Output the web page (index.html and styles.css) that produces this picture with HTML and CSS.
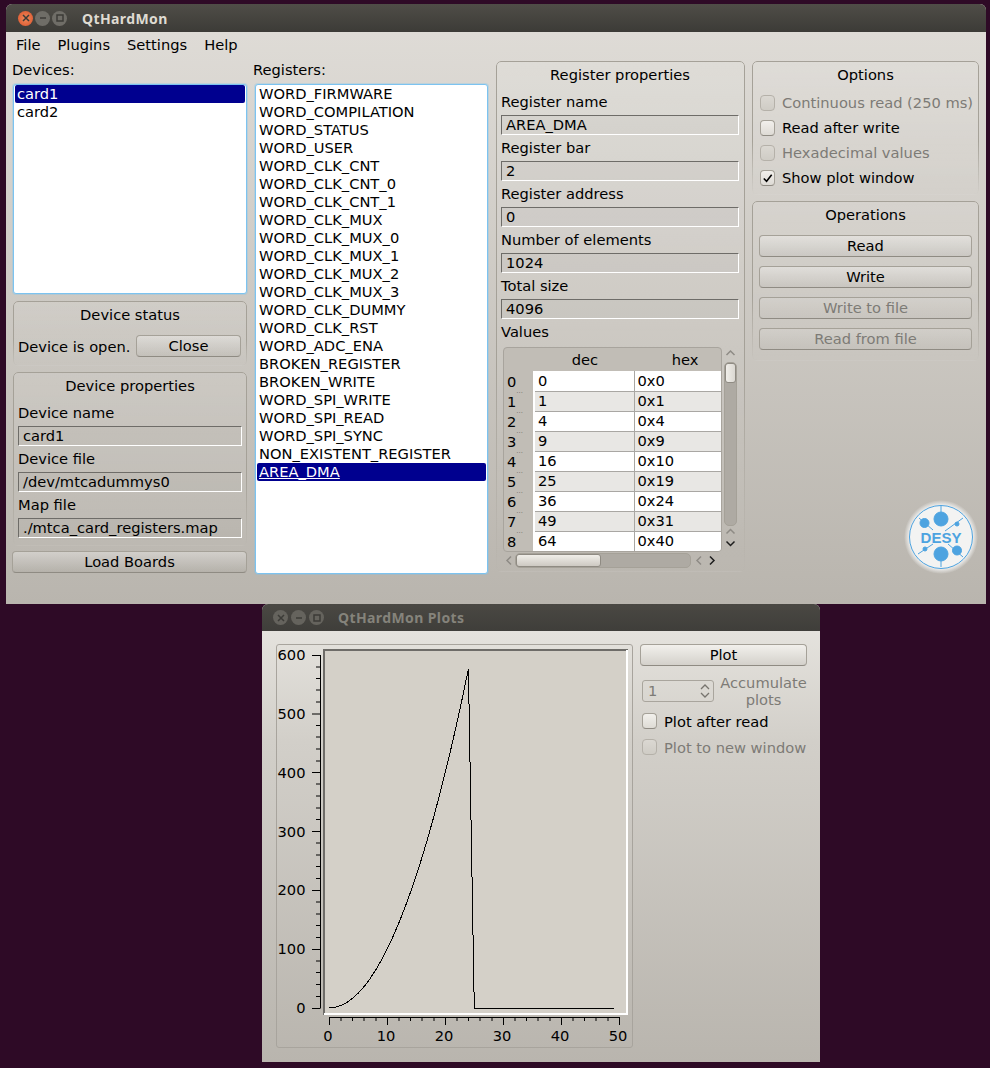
FILE: index.html
```html
<!DOCTYPE html>
<html lang="en">
<head>
    <meta charset="UTF-8">
    <meta name="viewport" content="width=device-width, initial-scale=1.0">
    <title>QtHardMon</title>
    <link rel="stylesheet" href="styles.css">
</head>
<body>
    <!-- main window -->
    <section class="window main-window">
        <header class="titlebar">
            <span class="wm-btn wm-close"><svg width="8" height="8" viewBox="0 0 8 8"><path d="M1 1L7 7M7 1L1 7"/></svg></span>
            <span class="wm-btn"><svg width="8" height="8" viewBox="0 0 8 8"><path d="M1 4H7"/></svg></span>
            <span class="wm-btn"><svg width="8" height="8" viewBox="0 0 8 8"><path d="M1 1H7V7H1Z"/></svg></span>
            <span class="title">QtHardMon</span>
        </header>
        <nav class="menubar">
            <span>File</span>
            <span>Plugins</span>
            <span>Settings</span>
            <span>Help</span>
        </nav>
        <div class="main-body">
            <div class="col">
                <div class="caption">Devices:</div>
                <ul class="list device-list">
                    <li class="selected">card1</li>
                    <li>card2</li>
                </ul>
                <div class="group status-group">
                    <div class="group-title">Device status</div>
                    <div class="status-row">
                        <span>Device is open.</span>
                        <button class="btn close-btn">Close</button>
                    </div>
                </div>
                <div class="group props-group">
                    <div class="group-title">Device properties</div>
                    <div class="prop-label first">Device name</div>
                    <div class="field">card1</div>
                    <div class="prop-label">Device file</div>
                    <div class="field">/dev/mtcadummys0</div>
                    <div class="prop-label">Map file</div>
                    <div class="field">./mtca_card_registers.map</div>
                </div>
                <button class="btn load-btn">Load Boards</button>
            </div>

            <div class="col">
                <div class="caption">Registers:</div>
                <ul class="list register-list">
                    <li>WORD_FIRMWARE</li>
                    <li>WORD_COMPILATION</li>
                    <li>WORD_STATUS</li>
                    <li>WORD_USER</li>
                    <li>WORD_CLK_CNT</li>
                    <li>WORD_CLK_CNT_0</li>
                    <li>WORD_CLK_CNT_1</li>
                    <li>WORD_CLK_MUX</li>
                    <li>WORD_CLK_MUX_0</li>
                    <li>WORD_CLK_MUX_1</li>
                    <li>WORD_CLK_MUX_2</li>
                    <li>WORD_CLK_MUX_3</li>
                    <li>WORD_CLK_DUMMY</li>
                    <li>WORD_CLK_RST</li>
                    <li>WORD_ADC_ENA</li>
                    <li>BROKEN_REGISTER</li>
                    <li>BROKEN_WRITE</li>
                    <li>WORD_SPI_WRITE</li>
                    <li>WORD_SPI_READ</li>
                    <li>WORD_SPI_SYNC</li>
                    <li>NON_EXISTENT_REGISTER</li>
                    <li class="selected underlined">AREA_DMA</li>
                </ul>
            </div>

            <div class="col">
                <div class="group register-group">
                    <div class="group-title">Register properties</div>
                    <div class="prop-label first">Register name</div>
                    <div class="field">AREA_DMA</div>
                    <div class="prop-label">Register bar</div>
                    <div class="field">2</div>
                    <div class="prop-label">Register address</div>
                    <div class="field">0</div>
                    <div class="prop-label">Number of elements</div>
                    <div class="field">1024</div>
                    <div class="prop-label">Total size</div>
                    <div class="field">4096</div>
                    <div class="prop-label">Values</div>
                    <div class="table-area">
                        <div class="table-frame">
                            <table class="values">
                                <thead>
                                    <tr><th class="corner"></th><th>dec</th><th class="hex-head">hex</th></tr>
                                </thead>
                                <tbody>
                                    <tr><th>0<i>...</i></th><td>0</td><td>0x0</td></tr>
                                    <tr><th>1<i>...</i></th><td>1</td><td>0x1</td></tr>
                                    <tr><th>2<i>...</i></th><td>4</td><td>0x4</td></tr>
                                    <tr><th>3<i>...</i></th><td>9</td><td>0x9</td></tr>
                                    <tr><th>4<i>...</i></th><td>16</td><td>0x10</td></tr>
                                    <tr><th>5<i>...</i></th><td>25</td><td>0x19</td></tr>
                                    <tr><th>6<i>...</i></th><td>36</td><td>0x24</td></tr>
                                    <tr><th>7<i>...</i></th><td>49</td><td>0x31</td></tr>
                                    <tr><th>8<i>...</i></th><td>64</td><td>0x40</td></tr>
                                </tbody>
                            </table>
                        </div>
                        <div class="vscroll">
                            <svg class="arrow" width="13" height="15" viewBox="0 0 13 15"><path class="dim" d="M2.500 8L6.500 4L10.500 8"/></svg>
                            <div class="vtrough"><div class="vthumb"></div></div>
                            <svg class="arrow" width="13" height="26" viewBox="0 0 13 26"><path class="dim" d="M2.500 7.500L6.500 3.500L10.500 7.500"/><path d="M2.500 15.500L6.500 19.500L10.500 15.500"/></svg>
                        </div>
                    </div>
                    <div class="hscroll">
                        <svg class="arrow" width="13" height="15" viewBox="0 0 13 15"><path class="dim" d="M9 3.500L5 7.500L9 11.500"/></svg>
                        <div class="htrough"><div class="hthumb"></div></div>
                        <svg class="arrow" width="13" height="15" viewBox="0 0 13 15"><path class="dim" d="M9 3.500L5 7.500L9 11.500"/></svg>
                        <svg class="arrow" width="13" height="15" viewBox="0 0 13 15"><path d="M5 3.500L9 7.500L5 11.500"/></svg>
                    </div>
                </div>
            </div>

            <div class="col">
                <div class="group options-group">
                    <div class="group-title">Options</div>
                    <div class="checks">
                        <label class="check disabled"><span class="box"></span>Continuous read (250 ms)</label>
                        <label class="check"><span class="box"></span>Read after write</label>
                        <label class="check disabled"><span class="box"></span>Hexadecimal values</label>
                        <label class="check"><span class="box"><svg width="14" height="14" viewBox="0 0 14 14"><path d="M3 7.500L6 10.500L11.500 3.500"/></svg></span>Show plot window</label>
                    </div>
                </div>
                <div class="group operations-group">
                    <div class="group-title">Operations</div>
                    <div class="op-buttons">
                        <button class="btn">Read</button>
                        <button class="btn">Write</button>
                        <button class="btn disabled">Write to file</button>
                        <button class="btn disabled">Read from file</button>
                    </div>
                </div>
                <svg class="desy-logo" width="74" height="74" viewBox="0 0 74 74">
                    <defs>
                        <radialGradient id="glow">
                            <stop offset="0.84" stop-color="#f3f3f2"/>
                            <stop offset="1" stop-color="#f3f3f2" stop-opacity="0"/>
                        </radialGradient>
                    </defs>
                    <circle cx="37" cy="37" r="37" fill="url(#glow)"/>
                    <circle cx="37" cy="37" r="31.500" fill="none" stroke="#4da3e0" stroke-width="1"/>
                    <g fill="#4da3e0" stroke="#4da3e0" stroke-width="1">
                        <path d="M37 6V12M37 61V67M15 18L29 30M44 44L59 57M59 18L41 31M14 54L29 44" fill="none"/>
                        <circle cx="37" cy="19" r="7"/>
                        <circle cx="37" cy="54" r="7"/>
                        <circle cx="20.500" cy="23" r="4.500"/>
                        <circle cx="53" cy="50.500" r="4.500"/>
                        <circle cx="53" cy="24" r="2"/>
                        <circle cx="21" cy="49" r="2"/>
                    </g>
                    <text class="desy-text" x="37" y="42.500" text-anchor="middle">DESY</text>
                </svg>
            </div>
        </div>
    </section>

    <!-- plot window -->
    <section class="window plot-window">
        <header class="titlebar inactive">
            <span class="wm-btn"><svg width="8" height="8" viewBox="0 0 8 8"><path d="M1 1L7 7M7 1L1 7"/></svg></span>
            <span class="wm-btn"><svg width="8" height="8" viewBox="0 0 8 8"><path d="M1 4H7"/></svg></span>
            <span class="wm-btn"><svg width="8" height="8" viewBox="0 0 8 8"><path d="M1 1H7V7H1Z"/></svg></span>
            <span class="title">QtHardMon Plots</span>
        </header>
        <div class="plot-body">
            <div class="plot-frame">
                <svg class="plot" width="355" height="402" viewBox="277 645 355 402">
                    <rect x="324" y="650" width="303" height="364" fill="#d4d0c8"/>
                    <path class="frame-dark" d="M324 1015V650H628"/>
                    <path class="frame-light" d="M324 1014H627V650"/>
                    <g class="axis">
                        <path d="M320.500 655V1008.500M312 655.500H320M312 714H320M312 772.500H320M312 831.500H320M312 890.500H320M312 949.500H320M312 1008.500H320"/>
                        <path d="M316 667H320M316 678.500H320M316 690H320M316 702H320M316 725.500H320M316 737H320M316 749H320M316 761H320M316 784H320M316 796H320M316 808H320M316 819.500H320M316 843H320M316 855H320M316 866.500H320M316 878.500H320M316 902H320M316 914H320M316 925.500H320M316 937.500H320M316 961H320M316 972.500H320M316 984.500H320M316 996.500H320"/>
                        <path d="M329 1017.500H620M329.500 1017V1025M387.500 1017V1025M445.500 1017V1025M503.500 1017V1025M561.500 1017V1025M619.500 1017V1025"/>
                        <path d="M341 1017V1021M352.500 1017V1021M364 1017V1021M376 1017V1021M399 1017V1021M410.500 1017V1021M422 1017V1021M434 1017V1021M457 1017V1021M468.500 1017V1021M480 1017V1021M492 1017V1021M515 1017V1021M526.500 1017V1021M538 1017V1021M550 1017V1021M573 1017V1021M584.500 1017V1021M596 1017V1021M608 1017V1021"/>
                    </g>
                    <g class="y-labels">
                        <text x="305.500" y="660">600</text>
                        <text x="305.500" y="719">500</text>
                        <text x="305.500" y="778">400</text>
                        <text x="305.500" y="837">300</text>
                        <text x="305.500" y="895">200</text>
                        <text x="305.500" y="954">100</text>
                        <text x="305.500" y="1013">0</text>
                    </g>
                    <g class="x-labels">
                        <text x="328" y="1041">0</text>
                        <text x="386" y="1041">10</text>
                        <text x="444" y="1041">20</text>
                        <text x="502" y="1041">30</text>
                        <text x="560" y="1041">40</text>
                        <text x="618" y="1041">50</text>
                    </g>
                    <polyline class="curve" points="329,1008 334.800,1007.400 340.600,1005.600 346.400,1002.700 352.200,998.600 358.100,993.300 363.900,986.800 369.700,979.200 375.500,970.300 381.300,960.300 387.100,949.200 392.900,936.800 398.700,923.300 404.500,908.600 410.300,892.700 416.200,875.600 422,857.400 427.800,838 433.600,817.400 439.400,795.600 445.200,772.700 451,748.600 456.800,723.300 462.600,696.800 468.400,669.100 474.300,1008.500 613.700,1008.500"/>
                </svg>
            </div>
            <div class="plot-side">
                <button class="btn plot-btn">Plot</button>
                <div class="accumulate">
                    <div class="spin">
                        <span>1</span>
                        <svg width="12" height="18" viewBox="0 0 12 18"><path d="M2 7L6 3L10 7M2 11L6 15L10 11"/></svg>
                    </div>
                    <div class="spin-label">Accumulate plots</div>
                </div>
                <label class="check"><span class="box"></span>Plot after read</label>
                <label class="check disabled"><span class="box"></span>Plot to new window</label>
            </div>
        </div>
    </section>
</body>
</html>
```

FILE: styles.css
```css
* {
    box-sizing: border-box;
}
body {
    margin: 0;
    height: 1068px;
    overflow: hidden;
    position: relative;
    background: #2e0a26;
    color: #000000;
    font-family: 'DejaVu Sans', sans-serif;
    font-size: 14.67px;
}

/* windows */
.window {
    position: absolute;
    display: flex;
    flex-direction: column;
    border-radius: 6px 6px 0 0;
    overflow: hidden;
}
.main-window {
    left: 6px;
    top: 4px;
    width: 980px;
    height: 600px;
    background: linear-gradient(#e0ddd8, #b9b5ae);
}
.plot-window {
    left: 262px;
    top: 604px;
    width: 558px;
    height: 458px;
    background: linear-gradient(#e9e7e2, #d2cfc9 30%, #b9b5ae);
}
.titlebar {
    flex: none;
    height: 28px;
    display: flex;
    align-items: center;
    padding-left: 12px;
    gap: 2px;
    background: linear-gradient(#4f4d47, #3c3b37);
}
.titlebar.inactive {
    height: 27px;
    padding-left: 11px;
    gap: 3px;
    background: linear-gradient(#4a4843, #3f3e3a);
}
.title {
    margin-left: 13px;
    font-family: 'Noto Sans', sans-serif;
    font-weight: 700;
    font-size: 14px;
    letter-spacing: 0.4px;
    color: #dfdbd2;
}
.inactive .title {
    margin-left: 11px;
    color: #85837b;
}
.wm-btn {
    width: 15px;
    height: 15px;
    border-radius: 50%;
    display: flex;
    align-items: center;
    justify-content: center;
    background: #6f6d67;
}
.wm-btn svg {
    fill: none;
    stroke: #3c3b37;
    stroke-width: 1.500;
}
.wm-close {
    background: radial-gradient(#f08a5a, #d9512b);
}
.inactive .wm-btn {
    background: #65635d;
}
.menubar {
    flex: none;
    height: 24px;
    display: flex;
    align-items: center;
    gap: 17px;
    padding-left: 10px;
}

/* columns */
.main-body {
    flex: 1;
    display: grid;
    grid-template-columns: 241px 243px 256px 227px;
    padding: 5px 0 31px 6px;
}
.col {
    display: flex;
    flex-direction: column;
    align-items: flex-start;
}
.caption {
    line-height: 17px;
    margin-bottom: 6px;
}
.list {
    list-style: none;
    margin: 0;
    padding: 0 1px;
    background: #ffffff;
    border: 1px solid #7cc3f0;
    border-radius: 3px;
    box-shadow: 0 0 0 1px rgba(124, 195, 240, 0.3);
    overflow: hidden;
}
.list li {
    height: 18px;
    line-height: 18px;
    padding-left: 2px;
    white-space: nowrap;
}
.list li.selected {
    background: #00008f;
    color: #ffffff;
    border-radius: 2px;
}
.list li.underlined {
    text-decoration: underline;
}
.device-list {
    width: 234px;
    height: 210px;
    margin-left: 1px;
}
.register-list {
    width: 233px;
    height: 490px;
    margin-left: 2px;
}

/* group boxes */
.group {
    position: relative;
    border: 1px solid transparent;
    border-radius: 5px;
    padding: 4px 4px 0;
    background: linear-gradient(rgba(255, 255, 255, 0.07), rgba(255, 255, 255, 0));
}
/* frame line that fades out towards the bottom */
.group::before {
    content: '';
    position: absolute;
    inset: -1px;
    border: 1px solid #a5a198;
    border-radius: 5px;
    -webkit-mask-image: linear-gradient(#000 60%, transparent);
    mask-image: linear-gradient(#000 60%, transparent);
    pointer-events: none;
}
.group-title {
    line-height: 18px;
    text-align: center;
}
.status-group {
    width: 234px;
    height: 65px;
    margin: 7px 0 0 1px;
}
.status-row {
    display: flex;
    align-items: center;
    justify-content: space-between;
    margin-top: 11px;
    padding-right: 1px;
}
.close-btn {
    width: 105px;
    height: 22px;
}
.props-group {
    width: 234px;
    height: 174px;
    margin: 6px 0 0 1px;
}
.prop-label {
    line-height: 18px;
    margin-top: 4px;
    white-space: nowrap;
}
.prop-label.first {
    margin-top: 9px;
}
.field {
    height: 20px;
    margin-top: 4px;
    padding-left: 4px;
    line-height: 18px;
    border: 1px solid;
    border-color: #6e6c68 #ffffff #ffffff #6e6c68;
    background: rgba(0, 0, 0, 0.02);
    white-space: nowrap;
}
.load-btn {
    width: 235px;
    height: 22px;
    margin: 5px 0 0 0;
}
.register-group {
    width: 249px;
    height: 511px;
    padding-right: 5px;
}
.options-group {
    width: 227px;
    height: 134px;
}
.operations-group {
    width: 227px;
    height: 160px;
    margin-top: 6px;
}

/* buttons */
.btn {
    display: block;
    font: inherit;
    padding: 0 0 1px;
    height: 22px;
    color: #000000;
    border: 1px solid #a5a198;
    border-bottom-color: #8f8b83;
    border-radius: 4px;
    background: linear-gradient(rgba(255, 255, 255, 0.32), rgba(0, 0, 0, 0.03));
}
.btn.disabled {
    color: #7d7b76;
    background: linear-gradient(rgba(255, 255, 255, 0.1), rgba(0, 0, 0, 0.02));
}
.plot-btn {
    width: 100%;
    background: linear-gradient(#f2f0ec, #d4d1cb);
}
.op-buttons {
    display: flex;
    flex-direction: column;
    gap: 9px;
    margin: 11px 2px 0;
}

/* checkboxes */
.checks {
    margin: 6px 0 0 3px;
}
.check {
    display: flex;
    align-items: center;
    gap: 7px;
    height: 25px;
    white-space: nowrap;
}
.check.disabled {
    color: #7d7b76;
}
.box {
    flex: none;
    width: 15px;
    height: 16px;
    display: flex;
    align-items: center;
    justify-content: center;
    border: 1px solid #a5a198;
    border-bottom-color: #8f8b83;
    border-radius: 4px;
    background: linear-gradient(#f2f0ec, #dedbd5);
}
.disabled .box {
    background: linear-gradient(#dbd8d2, #cfccc5);
    border-color: #b5b1a9;
}
.box svg {
    fill: none;
    stroke: #000000;
    stroke-width: 1.700;
}

/* values table */
.table-area {
    display: flex;
    align-items: flex-start;
    gap: 2px;
    margin: 6px 0 0 2px;
}
.table-frame {
    width: 219px;
    height: 205px;
    overflow: hidden;
    border: 1px solid #a8a49d;
    border-radius: 4px;
    background: #c1bdb6;
}
.values {
    border-collapse: collapse;
    table-layout: fixed;
    width: 218px;
}
.values th {
    font-weight: 400;
    padding: 0;
}
.values thead th {
    height: 23px;
    line-height: 22px;
    width: 100px;
    padding-left: 2px;
}
.values thead th.corner {
    width: 30px;
}
.values thead th.hex-head {
    width: 88px;
    padding-left: 14px;
}
.values tbody th {
    text-align: left;
    padding: 1px 0 0 3px;
    height: 20px;
    line-height: 18px;
    white-space: nowrap;
}
.values tbody th i {
    font-style: normal;
    font-size: 7px;
    line-height: 0;
    vertical-align: -6px;
    color: #77746e;
}
.values td {
    height: 20px;
    padding: 0 0 0 3px;
    line-height: 18px;
    background: #ffffff;
    border: 1px solid #a9a7a3;
    border-top: 0;
    border-right: 0;
}
.values td:nth-child(2) {
    border-right: 1px solid #a9a7a3;
    border-left: 2px solid #ffffff;
}
.values td:nth-child(3) {
    border-left: 0;
}
.values tbody tr:nth-child(even) td {
    background: #e8e7e4;
}
.vscroll {
    width: 13px;
    height: 205px;
    display: flex;
    flex-direction: column;
}
.arrow {
    display: block;
    flex: none;
    fill: none;
    stroke: #1e1e1e;
    stroke-width: 1.500;
}
.arrow .dim {
    stroke: #8e8b85;
}
.vtrough {
    flex: 1;
    border: 1px solid #a5a198;
    border-radius: 5px;
    background: #aeaaa3;
}
.vthumb {
    width: 11px;
    height: 20px;
    border: 1px solid #8f8b83;
    border-radius: 3px;
    background: linear-gradient(90deg, #f0eee9, #dbd8d2);
}
.hscroll {
    display: flex;
    align-items: center;
    height: 15px;
    margin: 1px 0 0 1px;
}
.htrough {
    width: 176px;
    height: 15px;
    border: 1px solid #a5a198;
    border-radius: 5px;
    background: #aeaaa3;
    margin-right: 1px;
}
.hthumb {
    width: 85px;
    height: 13px;
    border: 1px solid #8f8b83;
    border-radius: 3px;
    background: linear-gradient(#f0eee9, #cdc9c2);
}
.desy-logo {
    display: block;
    margin: auto 0 0 152px;
}
.desy-text {
    font-family: 'Liberation Sans', sans-serif;
    font-weight: 700;
    font-size: 15px;
    fill: #4da3e0;
}

/* plot window */
.plot-body {
    flex: 1;
    display: flex;
    align-items: flex-start;
    gap: 7px;
    padding: 13px 0 0 14px;
}
.plot-frame {
    width: 357px;
    height: 404px;
    border: 1px solid #a8a49d;
    border-radius: 3px;
}
.plot {
    display: block;
}
.plot text {
    font-size: 14.67px;
}
.frame-dark {
    fill: none;
    stroke: #6e6c68;
    stroke-width: 2;
}
.frame-light {
    fill: none;
    stroke: #ffffff;
    stroke-width: 2;
}
.axis path {
    fill: none;
    stroke: #000000;
    stroke-width: 1;
}
.y-labels {
    text-anchor: end;
}
.x-labels {
    text-anchor: middle;
}
.curve {
    fill: none;
    stroke: #000000;
    stroke-width: 1;
    shape-rendering: crispEdges;
}
.plot-side {
    width: 167px;
}
.accumulate {
    display: flex;
    align-items: center;
    height: 35px;
    margin: 7px 0 0 2px;
    gap: 6px;
}
.spin {
    flex: none;
    width: 72px;
    height: 22px;
    display: flex;
    align-items: center;
    justify-content: space-between;
    padding: 0 2px 0 5px;
    color: #7d7b76;
    border: 1px solid #a9a59d;
    border-radius: 3px;
}
.spin svg {
    fill: none;
    stroke: #77746e;
    stroke-width: 1.300;
}
.spin-label {
    width: 87px;
    line-height: 17px;
    text-align: center;
    color: #7d7b76;
}
.plot-side .check {
    height: 26px;
    margin-left: 2px;
}
```
